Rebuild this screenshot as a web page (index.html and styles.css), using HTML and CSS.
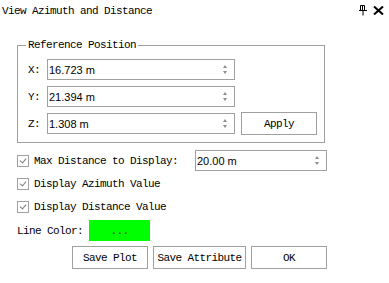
FILE: index.html
```html
<!DOCTYPE html>
<html lang="en">
<head>
  <meta charset="UTF-8">
  <title>View Azimuth and Distance</title>
  <link rel="stylesheet" href="styles.css">
</head>
<body>

<div class="titlebar">
  <span class="title">View Azimuth and Distance</span>
  <span class="tools">
    <svg class="pin" width="8" height="11" viewBox="0 0 8 11">
      <path d="M1.5 0.5h4v5h-4z M3.5 0.5v5 M0 5.5h8 M4 5.5v5" fill="none" stroke="#000" stroke-width="1"/>
    </svg>
    <svg class="close" width="11" height="9" viewBox="0 0 11 9">
      <path d="M1 0.5l9 8 M10 0.5l-9 8" stroke="#000" stroke-width="2"/>
    </svg>
  </span>
</div>

<div class="content">
  <fieldset class="group">
    <legend>Reference Position</legend>
    <div class="coords">
      <span class="axis">X:</span>
      <div class="spin"><span class="value">16.723 m</span><span class="arrows"></span></div>
      <span></span>

      <span class="axis">Y:</span>
      <div class="spin"><span class="value">21.394 m</span><span class="arrows"></span></div>
      <span></span>

      <span class="axis">Z:</span>
      <div class="spin"><span class="value">1.308 m</span><span class="arrows"></span></div>
      <button class="btn apply">Apply</button>
    </div>
  </fieldset>

  <div class="options">
    <div class="row first">
      <span class="check"></span>
      <span class="label">Max Distance to Display:</span>
      <div class="spin distance"><span class="value">20.00 m</span><span class="arrows"></span></div>
    </div>
    <div class="row">
      <span class="check"></span>
      <span class="label">Display Azimuth Value</span>
    </div>
    <div class="row">
      <span class="check"></span>
      <span class="label">Display Distance Value</span>
    </div>
    <div class="row color-row">
      <span class="label">Line Color:</span>
      <span class="swatch">...</span>
    </div>
    <div class="buttons">
      <button class="btn">Save Plot</button>
      <button class="btn wide">Save Attribute</button>
      <button class="btn">OK</button>
    </div>
  </div>
</div>

</body>
</html>
```

FILE: styles.css
```css
body {
  margin: 0;
  background: white;
  color: black;
  font-family: 'Liberation Mono', 'DejaVu Sans Mono', monospace;
  font-size: 11px;
  letter-spacing: -0.6px;
}

.titlebar {
  height: 21px;
  display: flex;
  align-items: center;
  justify-content: space-between;
  padding: 0 5px 0 2px;
}

.tools {
  display: flex;
  align-items: center;
  gap: 6px;
}

.content {
  padding-left: 17px;
}

.group {
  box-sizing: border-box;
  width: 308px;
  margin: 18px 0 0 0;
  padding: 8px 0 8px 10px;
  border: 1px solid #a0a0a0;
  min-width: 0;
}

.group legend {
  padding: 0 2px;
  margin-left: -2px;
  line-height: 12px;
}

.coords {
  display: grid;
  grid-template-columns: 13px 188px 76px;
  grid-auto-rows: 21px;
  column-gap: 6px;
  row-gap: 6px;
  align-items: center;
}

.spin {
  box-sizing: border-box;
  height: 21px;
  border: 1px solid #a0a0a0;
  display: flex;
  align-items: center;
  padding: 0 5px 0 1px;
  font-family: 'Liberation Sans', Arial, sans-serif;
  letter-spacing: 0;
}

.spin .value {
  flex: 1;
}

.arrows {
  width: 7px;
  height: 11px;
  position: relative;
}

.arrows::before,
.arrows::after {
  content: '';
  position: absolute;
  left: 1px;
  border-left: 2.5px solid transparent;
  border-right: 2.5px solid transparent;
}

.arrows::before {
  top: 1px;
  border-bottom: 3px solid #8c8c8c;
}

.arrows::after {
  bottom: 1px;
  border-top: 3px solid #8c8c8c;
}

.btn {
  box-sizing: border-box;
  height: 23px;
  border: 1px solid #a0a0a0;
  background: white;
  color: black;
  font: inherit;
  letter-spacing: inherit;
  padding: 0;
}

.apply {
  margin: -1px 0;
}

.options {
  width: 310px;
  margin-top: 7px;
}

.row {
  height: 20px;
  display: flex;
  align-items: center;
  margin-top: 3px;
}

.row.first {
  height: 21px;
  margin-top: 0;
}

.check {
  box-sizing: border-box;
  width: 12px;
  height: 12px;
  border: 1px solid #a0a0a0;
  margin-right: 5px;
  position: relative;
}

.check::after {
  content: '';
  position: absolute;
  left: 3px;
  top: 1px;
  width: 3px;
  height: 5px;
  border-right: 1.5px solid #7c7c7c;
  border-bottom: 1.5px solid #7c7c7c;
  transform: rotate(40deg);
}

.distance {
  width: 132px;
  margin-left: auto;
}

.color-row {
  height: 21px;
}

.swatch {
  width: 61px;
  height: 21px;
  margin-left: 6px;
  background: #00ff00;
  display: flex;
  align-items: center;
  justify-content: center;
  color: #333;
}

.buttons {
  display: flex;
  justify-content: flex-end;
  gap: 5px;
  margin-top: 5px;
}

.buttons .btn {
  width: 76px;
}

.buttons .wide {
  width: 93px;
}
```
